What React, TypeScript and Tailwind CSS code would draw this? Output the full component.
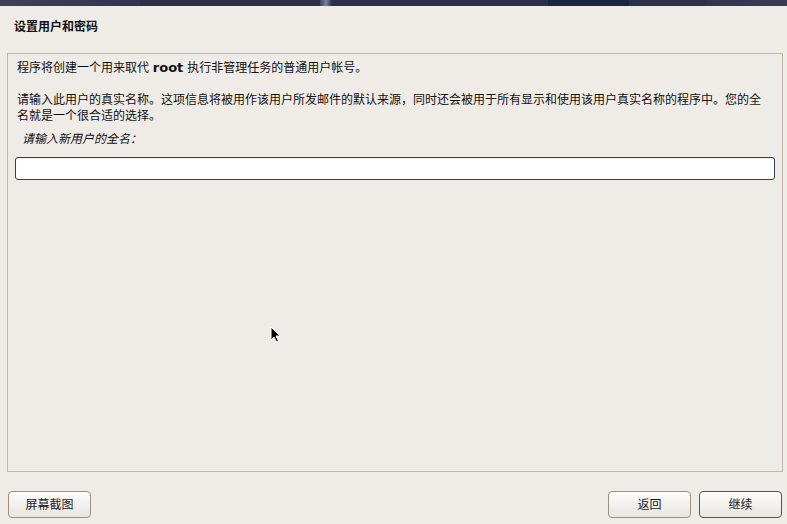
import React from "react";

const font = { fontFamily: '"DejaVu Sans", "Noto Sans CJK SC", sans-serif' };

function Btn({ label, dark }: { label: string; dark?: boolean }) {
  return (
    <button
      className={
        "h-[27px] w-[83px] rounded-[4px] border bg-gradient-to-b from-[#fdfcfb] to-[#e9e5df] text-[12px] text-[#1a1a1a] leading-none " +
        (dark ? "border-[#5a5550]" : "border-[#9a9082]")
      }
    >
      {label}
    </button>
  );
}

export default function App() {
  return (
    <div className="relative w-[787px] h-[524px] bg-[#efebe7] flex flex-col overflow-hidden text-[#111]" style={font}>
      {/* top bar */}
      <div className="h-[6px] flex shrink-0">
        <div className="w-[140px] bg-gradient-to-r from-[#3a4159] to-[#2e3550]" />
        <div className="w-[180px] bg-[#29304a]" />
        <div className="w-[12px] bg-gradient-to-r from-[#3b4662] via-[#7a8299] to-[#2a3049]" />
        <div className="w-[216px] bg-[#28304b]" />
        <div className="w-[81px] bg-[#18263f]" />
        <div className="w-[78px] bg-[#2a314b]" />
        <div className="flex-1 bg-gradient-to-r from-[#2f3650] to-[#353c56]" />
      </div>
      {/* title */}
      <div className="h-[47px] shrink-0 pl-[14px] pt-[13px] text-[12px] font-bold leading-[16px]">
        设置用户和密码
      </div>
      {/* frame */}
      <div className="ml-[7px] mr-[4px] h-[419px] shrink-0 border border-[#c2b9ae] pl-[7px] pr-[7px] pt-[6px] text-[12px] leading-[16px]">
        <div className="pl-[2px] whitespace-nowrap">
          程序将创建一个用来取代 <span className="font-bold text-[13px]">root</span> 执行非管理任务的普通用户帐号。
        </div>
        <div className="pl-[2px] mt-[16px] whitespace-nowrap">
          请输入此用户的真实名称。这项信息将被用作该用户所发邮件的默认来源，同时还会被用于所有显示和使用该用户真实名称的程序中。您的全
          <br />
          名就是一个很合适的选择。
        </div>
        <div className="pl-[7px] mt-[7px] italic">请输入新用户的全名：</div>
        <div className="mt-[10px] h-[23px] rounded-[3px] border border-[#3a3d52] bg-white shadow-[inset_0_1px_1px_rgba(0,0,0,0.08)]" />
      </div>
      {/* buttons */}
      <div className="mt-[19px] flex items-center pl-[8px] pr-[5px]">
        <Btn label="屏幕截图" />
        <div className="flex-1" />
        <Btn label="返回" />
        <div className="w-[8px]" />
        <Btn label="继续" dark />
      </div>
      {/* mouse cursor */}
      <svg className="absolute left-[270px] top-[326px]" width="12" height="18" viewBox="0 0 12 18">
        <path d="M1 1 L1 14 L4 11 L6.5 16 L8.5 15 L6 10 L10 10 Z" fill="#000" stroke="#fff" strokeWidth="1" />
      </svg>
    </div>
  );
}
